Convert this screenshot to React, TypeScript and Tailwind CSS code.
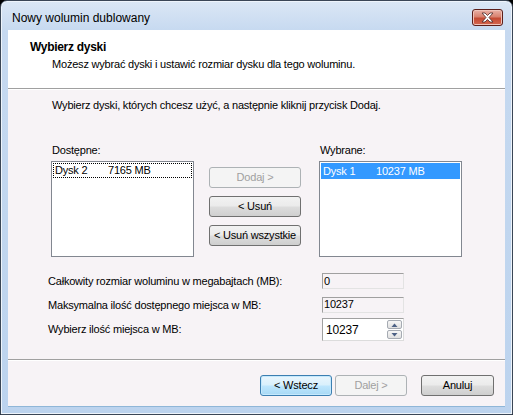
import React from "react";

const font = { fontFamily: '"Liberation Sans", Arial, sans-serif' };

function Btn({
  label,
  kind = "normal",
  className = "",
}: {
  label: string;
  kind?: "normal" | "disabled" | "default";
  className?: string;
}) {
  const styles = {
    normal:
      "border-[#707070] text-black bg-[linear-gradient(#f2f2f2_0%,#ebebeb_48%,#dddddd_52%,#cfcfcf_100%)]",
    disabled: "border-[#adb2b5] text-[#a0a0a0] bg-[#f4f4f4]",
    default:
      "border-[#3c7fb1] text-black bg-[linear-gradient(#eaf6fd_0%,#d9f0fc_48%,#bee6fd_52%,#a7d9f5_100%)] shadow-[inset_0_0_0_1px_#c5e9fd]",
  }[kind];
  return (
    <div
      className={`h-[21px] flex items-center justify-center rounded-[3px] border text-[11px] leading-none tracking-[-0.2px] ${styles} ${className}`}
    >
      {label}
    </div>
  );
}

function ListBox({
  name,
  size,
  selected,
}: {
  name: string;
  size: string;
  selected?: boolean;
}) {
  return (
    <div className="w-[143px] h-[96px] bg-white border border-[#828790] p-px">
      <div
        className={`flex text-[11px] leading-none items-center tracking-[-0.2px] ${
          selected
            ? "h-[16px] bg-[#3399ff] text-white pl-[2px]"
            : "h-[15px] border border-dotted border-black pl-px"
        }`}
      >
        <span className="w-[53px]">{name}</span>
        <span>{size}</span>
      </div>
    </div>
  );
}

function ReadField({ value }: { value: string }) {
  return (
    <div className="w-[82px] h-[16px] border border-t-[#a0a0a0] border-l-[#a0a0a0] border-r-[#e3e3e3] border-b-[#e3e3e3] bg-[#f7f3f6] flex items-center pl-px text-[11px] leading-none">
      {value}
    </div>
  );
}

function SpinField({ value }: { value: string }) {
  return (
    <div className="w-[82px] h-[23px] border border-t-[#a0a0a0] border-l-[#a0a0a0] border-r-[#dcdcdc] border-b-[#dcdcdc] bg-white flex items-center text-[12px] leading-none">
      <span className="flex-1 pl-[3px]">{value}</span>
      <div className="flex flex-col gap-px mr-px">
        <div className="w-[15px] h-[9px] border border-[#a6abb3] rounded-[2px] bg-[linear-gradient(#f6f6f6,#e0e0e0)] flex items-center justify-center">
          <svg width="7" height="4" viewBox="0 0 7 4">
            <path d="M0.5 4 L3.5 0.5 L6.5 4 Z" fill="#4d6185" />
          </svg>
        </div>
        <div className="w-[15px] h-[9px] border border-[#a6abb3] rounded-[2px] bg-[linear-gradient(#f6f6f6,#e0e0e0)] flex items-center justify-center">
          <svg width="7" height="4" viewBox="0 0 7 4">
            <path d="M0.5 0 L6.5 0 L3.5 3.5 Z" fill="#4d6185" />
          </svg>
        </div>
      </div>
    </div>
  );
}

export default function App() {
  return (
    <div className="w-[513px] h-[415px] bg-black" style={font}>
      <div className="w-full h-full flex flex-col rounded-t-[7px] border border-[#3a4656] bg-[linear-gradient(#dbe7f5_0px,#c6d9f0_30px,#bcd3ee_100%)] shadow-[inset_0_0_0_1px_#eef4fb]">
        {/* title bar */}
        <div className="h-[29px] shrink-0 flex items-center pl-[11px] pr-[9px]">
          <span className="text-[12px] text-black flex-1 pt-[4px]">Nowy wolumin dublowany</span>
          <div className="w-[31px] h-[17px] mt-[4px] rounded-[3px] border border-[#5c1f1a] bg-[linear-gradient(#eab1a6_0%,#d9826f_45%,#c44a33_55%,#d4674f_100%)] shadow-[inset_0_0_0_1px_#f0c3b9] flex items-center justify-center">
            <svg width="13" height="11" viewBox="0 0 13 11">
              <path
                d="M1 1 L4 1 L6.5 3.5 L9 1 L12 1 L8 5.5 L12 10 L9 10 L6.5 7.5 L4 10 L1 10 L5 5.5 Z"
                fill="#ffffff"
                stroke="#4a2a2a"
                strokeWidth="0.8"
              />
            </svg>
          </div>
        </div>

        {/* client area */}
        <div className="flex-1 mx-[7px] mb-[7px] flex flex-col bg-[#f7f3f6] text-black text-[11px] tracking-[-0.2px] border-b border-[#8fb6d8]">
          {/* header */}
          <div className="h-[58px] shrink-0 bg-white pl-[22px] pt-[10px]">
            <div className="font-bold text-[12px] leading-[14px] tracking-[-0.3px]">Wybierz dyski</div>
            <div className="pl-[22px] mt-[3px] text-[11px] leading-[14px]">
              Możesz wybrać dyski i ustawić rozmiar dysku dla tego woluminu.
            </div>
          </div>
          <div className="h-px bg-[#a0a0a0]" />
          <div className="h-px bg-white" />

          {/* body */}
          <div className="flex-1 flex flex-col pl-[44px]">
            <div className="mt-[8px] leading-[14px]">
              Wybierz dyski, których chcesz użyć, a następnie kliknij przycisk Dodaj.
            </div>

            <div className="flex mt-[31px] -ml-px">
              <div className="flex flex-col">
                <div className="leading-[14px] ml-px mb-[4px]">Dostępne:</div>
                <ListBox name="Dysk 2" size="7165 MB" />
              </div>
              <div className="flex flex-col gap-[8px] mt-[24px] ml-[15px] mr-[18px] w-[92px]">
                <Btn label="Dodaj >" kind="disabled" />
                <Btn label="< Usuń" />
                <Btn label="< Usuń wszystkie" />
              </div>
              <div className="flex flex-col">
                <div className="leading-[14px] ml-px mb-[4px]">Wybrane:</div>
                <ListBox name="Dysk 1" size="10237 MB" selected />
              </div>
            </div>

            <div className="flex flex-col mt-[16px] -ml-[4px] gap-[7px]">
              <div className="flex items-center">
                <span className="w-[274px]">Całkowity rozmiar woluminu w megabajtach (MB):</span>
                <ReadField value="0" />
              </div>
              <div className="flex items-center">
                <span className="w-[274px]">Maksymalna ilość dostępnego miejsca w MB:</span>
                <ReadField value="10237" />
              </div>
              <div className="flex items-center -mt-[2px]">
                <span className="w-[274px]">Wybierz ilość miejsca w MB:</span>
                <SpinField value="10237" />
              </div>
            </div>
          </div>

          <div className="h-px bg-[#a0a0a0]" />
          <div className="h-px bg-white" />
          <div className="h-[45px] shrink-0 flex items-start pt-[14px] justify-end pr-[11px]">
            <Btn label="< Wstecz" kind="default" className="w-[72px]" />
            <Btn label="Dalej >" kind="disabled" className="w-[72px] ml-[3px]" />
            <Btn label="Anuluj" className="w-[73px] ml-[14px]" />
          </div>
        </div>
      </div>
    </div>
  );
}
